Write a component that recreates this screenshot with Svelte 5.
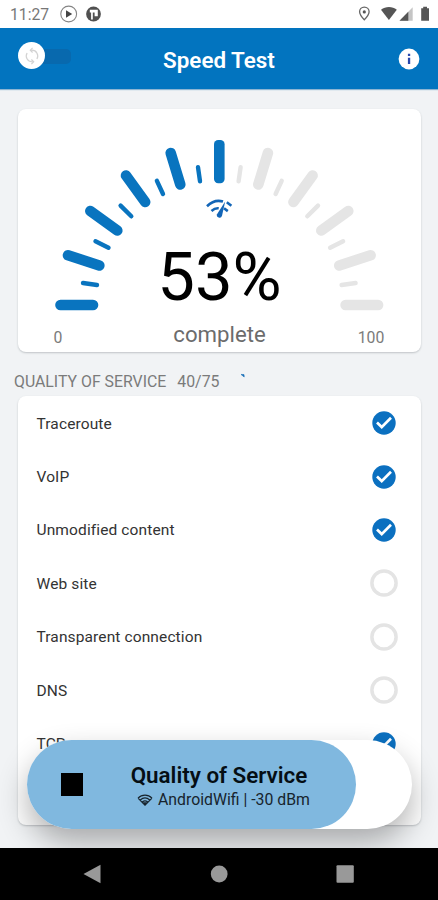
<script>
  const major = [
    [60.5, 305, 93, 305], [68, 255.3, 99.3, 265.5], [90.3, 211, 117.3, 230.5],
    [126, 175.5, 145.2, 202], [170.7, 153, 180.3, 184.5]
  ];
  const minor = [
    [83, 283, 97, 285], [95.5, 241.2, 108.5, 247.8], [120.6, 205.6, 131.3, 216.3],
    [156.9, 180.8, 163, 194], [198, 167.3, 200, 181.2]
  ];
  const ticks = [
    ...major.map((p) => ({ p, w: 10.6 })),
    ...minor.map((p) => ({ p, w: 4.4 }))
  ];
  const tests = [
    ['Traceroute', true], ['VoIP', true], ['Unmodified content', true],
    ['Web site', false], ['Transparent connection', false], ['DNS', false], ['TCP', true]
  ];
</script>

<div class="screen">
  <div class="status">
    <span class="clock">11:27</span>
    <svg class="left" width="46" height="20" viewBox="58 4 46 20">
      <circle cx="68.7" cy="14" r="7.9" fill="none" stroke="#858585" stroke-width="1.1" />
      <path d="M66 10.2v7.6l6.2-3.8z" fill="#444" />
      <circle cx="93.5" cy="14" r="7.4" fill="#505050" />
      <path d="M89.8 9.8h8v6.4h-3.2v-3.6h-1.8v7h-1.7v-7h-1.3z" fill="#fff" />
    </svg>
    <svg class="right" width="78" height="20" viewBox="356 4 78 20">
      <path d="M364.3 7.1c-2.8 0-4.7 2-4.7 4.6 0 3.1 4.7 8.1 4.7 8.1s4.8-5 4.8-8.1c0-2.6-2-4.6-4.8-4.6z" fill="none" stroke="#666" stroke-width="1.3" />
      <circle cx="364.3" cy="11.9" r="1.6" fill="#555" />
      <path d="M381 9.8c4.6-3.8 11.3-3.8 15.8 0l-7.9 10.2z" fill="#555" />
      <path d="M399.5 20.8l13.2-13.6v13.6z" fill="#c5c5c5" />
      <path d="M399.5 20.8l8.8-9.1v9.1z" fill="#555" />
      <path d="M421.2 8.2h2v-1.5h3.8v1.5h2v12.6h-7.8z" fill="#555" />
    </svg>
  </div>
  <header>
    <div class="toggle">
      <div class="track"></div>
      <div class="thumb">
        <svg width="18" height="18" viewBox="0 0 18 18" fill="none" stroke="#d2d2d2" stroke-width="1.2">
          <path d="M8 3.2H9a5.8 5.8 0 0 1 4.9 8.8M10 14.8H9A5.8 5.8 0 0 1 4.1 6" />
          <path d="M9.6.9L7.3 3.2l2.3 2.3M8.4 12.5l2.3 2.3-2.3 2.3" />
        </svg>
      </div>
    </div>
    <h1>Speed Test</h1>
    <svg class="info" width="22" height="22" viewBox="0 0 22 22">
      <circle cx="11" cy="11" r="10.4" fill="#fff" />
      <path d="M9.9 5.8h2.3V8H9.9zM9.9 9.8h2.3v6.3H9.9z" fill="#2948ad" />
    </svg>
  </header>

  <main>
    <section class="card gauge">
      <svg class="dial" width="403" height="243" viewBox="18 109 403 243">
        <g stroke-linecap="round">
          {#each ticks as { p, w }}
            <line x1={p[0]} y1={p[1]} x2={p[2]} y2={p[3]} stroke-width={w} stroke="#0974bf" />
            <line x1={438.6 - p[0]} y1={p[1]} x2={438.6 - p[2]} y2={p[3]} stroke-width={w} stroke="#e5e5e5" />
          {/each}
        </g>
        <rect x="214" y="140" width="10.6" height="43.3" rx="4.2" fill="#0974bf" />
        <g fill="none" stroke="#1265b7" stroke-width="2.6">
          <path d="M207 206.2c5-4.8 11-6.2 16-4.6" />
          <path d="M211.5 211c2.4-2.2 4.6-3 7.2-2.7" />
          <path d="M226.8 202.2l4.6 3.5M224 208.2l3.8 2.9" />
          <path d="M225.2 201.5l-3.2 14.3a2.6 2.6 0 0 1-5-1.6z" fill="#1265b7" stroke="none" />
        </g>
      </svg>
      <div class="percent">53%</div>
      <div class="legend"><span>0</span><span class="complete">complete</span><span>100</span></div>
    </section>

    <div class="heading">
      <span>QUALITY OF SERVICE</span><span class="count">40/75</span>
      <svg width="6" height="6" viewBox="0 0 6 6"><path d="M1 1.4l3 .2.2 2.4z" fill="#1b70b8" stroke="#1b70b8" stroke-width=".6" /></svg>
    </div>

    <section class="card list">
      {#each tests as [name, done]}
        <div class="row">
          <span>{name}</span>
          <svg width="28" height="28" viewBox="0 0 28 28">
            {#if done}
              <circle cx="14" cy="14" r="11.7" fill="#0b70c0" />
              <path d="M7 13.6l4.7 4.5 9.3-9.4" fill="none" stroke="#fff" stroke-width="2.7" />
            {:else}
              <circle cx="14" cy="14" r="12.1" fill="#fff" stroke="#e4e4e4" stroke-width="3.5" />
            {/if}
          </svg>
        </div>
      {/each}
    </section>
  </main>

  <div class="action">
    <div class="progress">
      <div class="stop"></div>
      <div class="texts">
        <strong>Quality of Service</strong>
        <div class="network">
          <svg width="16" height="12" viewBox="0 0 16 12" fill="none" stroke="#17242d" stroke-width="1.2">
            <path d="M1 4.2c4-4.1 10-4.1 14 0M3.2 6c3-2.6 6.6-2.6 9.6 0M5.4 7.8c1.8-1.3 3.4-1.3 5.2 0M1 4.2l7 7 7-7" />
            <path d="M5.8 8.3h4.4L8 11z" fill="#17242d" stroke="none" />
          </svg>
          <span>AndroidWifi | -30 dBm</span>
        </div>
      </div>
    </div>
  </div>

  <nav>
    <svg width="438" height="52" viewBox="0 848 438 52" fill="#999">
      <path d="M83.5 874L100.5 864.7v18.6z" />
      <circle cx="219.2" cy="874" r="8.4" />
      <rect x="336.5" y="865.3" width="17.3" height="17.5" rx="1" />
    </svg>
  </nav>
</div>

<style>
  :global(body) { margin: 0; }
  .screen {
    position: relative; width: 438px; height: 900px; overflow: hidden;
    display: flex; flex-direction: column; background: #f1f3f5;
    font-family: Roboto, "Liberation Sans", sans-serif; color: #222;
  }
  .status { height: 27.5px; flex: none; background: #fff; display: flex; align-items: center; box-sizing: border-box; padding: 0 4px 0 10px; }
  .clock { width: 48px; font-size: 15.7px; color: #777; padding-top: 1px; box-sizing: border-box; }
  .right { margin-left: auto; }
  header {
    height: 61.5px; flex: none; box-sizing: border-box; background: #0274bf; padding: 0 18px;
    display: grid; grid-template-columns: 60px 1fr 60px; align-items: center;
    box-shadow: 0 1px 1px #8db5d3;
  }
  .toggle { position: relative; width: 54px; height: 28px; margin-top: -4px; }
  .track { position: absolute; left: 14px; top: 7px; width: 39px; height: 15px; border-radius: 5px; background: #0869ae; }
  .thumb { position: absolute; left: 0; top: 0; width: 27px; height: 27px; border-radius: 50%; background: #fff; display: flex; align-items: center; justify-content: center; }
  h1 { margin: 4px 0 0; text-align: center; font-size: 22.4px; line-height: 28px; font-weight: 600; color: #fff; }
  .info { justify-self: end; margin-top: 1px; }
  main { flex: 1; display: flex; flex-direction: column; padding: 20px 17px 0 18px; }
  .card { background: #fff; border-radius: 8px; box-shadow: 0 1px 2px #bfc3c7; flex: none; }
  .gauge { height: 243px; position: relative; display: flex; flex-direction: column; justify-content: flex-end; }
  .dial { position: absolute; left: 0; top: 0; }
  .percent { text-align: center; font-size: 67px; line-height: 76px; color: #000; font-weight: 400; margin-bottom: 1px; }
  .legend { display: grid; grid-template-columns: 80px 1fr 80px; align-items: center; height: 36px; color: #7b7b7b; font-size: 15.8px; text-align: center; }
  .legend .complete { font-size: 22.2px; color: #6c6c6c; }
  .legend span:not(.complete) { padding-top: 7px; }
  .legend span:last-child { padding-right: 20px; }
  .heading { display: flex; align-items: center; height: 43.5px; box-sizing: border-box; padding-top: 15px; margin-left: -4px; color: #7b7b7b; font-size: 15.85px; }
  .count { margin-left: 11px; }
  .heading svg { margin: -11px 0 0 20.5px; }
  .list { height: 429px; overflow: hidden; box-sizing: border-box; padding: 1px 23px 0 18.5px; }
  .row { height: 53.4px; display: flex; align-items: center; justify-content: space-between; color: #333; font-size: 15.5px; letter-spacing: .12px; }
  .row span { padding-top: 1px; }
  .action {
    position: absolute; left: 27px; top: 740px; width: 385px; height: 88.5px;
    border-radius: 45px; background: #fff; box-shadow: 0 14px 30px rgba(0,0,0,.3);
  }
  .progress { width: 329px; height: 100%; border-radius: 45px; background: #80b8df; display: flex; align-items: center; }
  .stop { width: 22.5px; height: 22.5px; margin-left: 33.5px; background: #000; }
  .texts { width: 184px; margin-left: 44px; padding-top: 5px; text-align: center; color: #050e14; }
  strong { display: block; font-size: 22.4px; line-height: 26px; font-weight: 600; white-space: nowrap; }
  .network { display: flex; align-items: center; gap: 5px; margin-left: 10px; font-size: 15.8px; line-height: 24px; white-space: nowrap; color: #17242d; }
  nav { height: 52px; flex: none; background: #000; position: absolute; top: 848px; left: 0; }
</style>
